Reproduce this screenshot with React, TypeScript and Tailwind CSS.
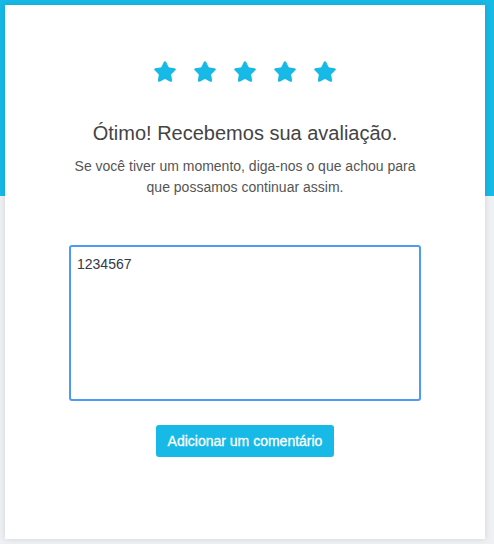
import { Star } from "lucide-react";

export default function App() {
  const stars = [1, 2, 3, 4, 5];

  return (
    <div
      className="relative min-h-[544px] w-full bg-[#eef0f4] p-[5px]"
      style={{ fontFamily: '"Liberation Sans", Arial, sans-serif' }}
    >
      <div className="absolute inset-x-0 top-0 h-[196px] bg-[#17b9e6]" />
      <div className="relative flex h-[534px] w-[480px] flex-col items-center bg-white pt-[55px] shadow-[0_0_6px_rgba(0,0,0,0.12)]">
        <div className="flex gap-[16px]">
          {stars.map((s) => (
            <Star key={s} size={24} className="fill-[#17b9e6] text-[#17b9e6]" strokeWidth={1.5} />
          ))}
        </div>
        <h1 className="mt-[36px] text-[20px] leading-[26px] text-[#444]">
          Ótimo! Recebemos sua avaliação.
        </h1>
        <p className="mt-[10px] w-[350px] text-center text-[14px] leading-[21px] text-[#555]">
          Se você tiver um momento, diga-nos o que achou para que possamos continuar assim.
        </p>
        <textarea
          defaultValue="1234567"
          className="mt-[47px] h-[156px] w-[352px] resize-none rounded-[3px] border-2 border-[#4d9bf5] px-[6px] pt-[8px] pb-[6px] text-[14px] leading-[18px] text-[#333a47] outline-none"
        />
        <button className="mt-[24px] h-[32px] rounded-[3px] bg-[#17b9e6] px-[12px] text-[14px] font-normal text-white [-webkit-text-stroke:0.3px_white]">
          Adicionar um comentário
        </button>
      </div>
    </div>
  );
}
